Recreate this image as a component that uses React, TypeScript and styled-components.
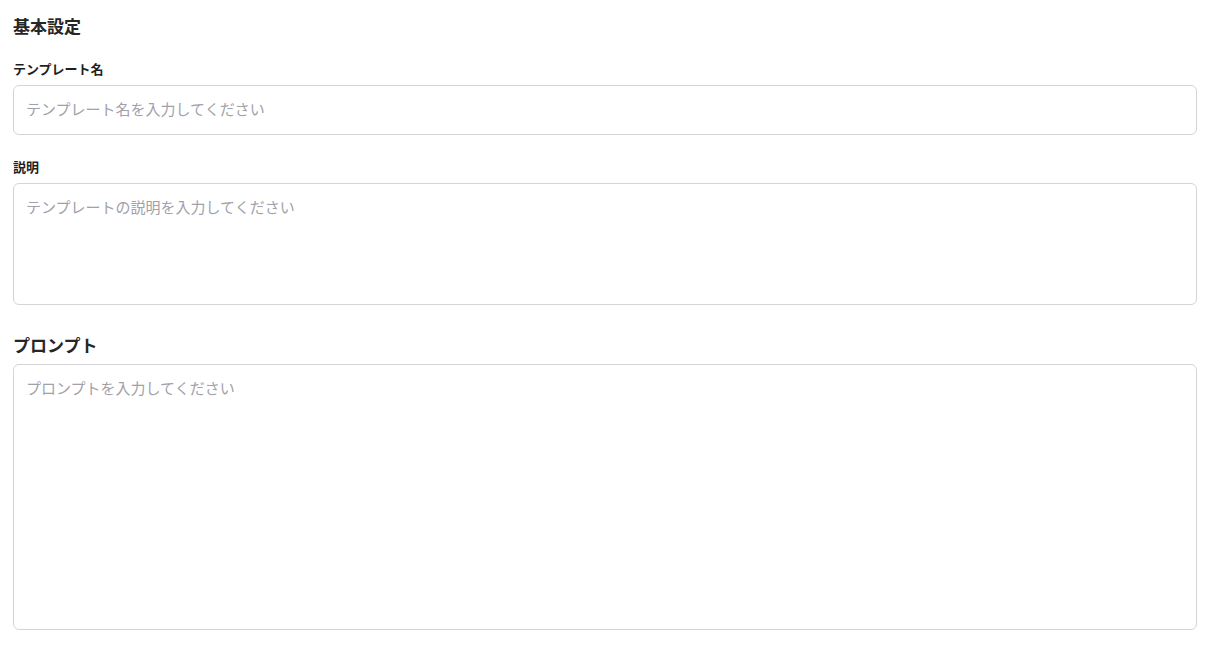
import React from 'react';
import styled, { createGlobalStyle } from 'styled-components';

const GlobalStyle = createGlobalStyle`
  body {
    margin: 0;
    background: #ffffff;
    font-family: "Noto Sans CJK JP", "Noto Sans", sans-serif;
    color: #1f2328;
  }
  * { box-sizing: border-box; }
`;

const Page = styled.div`
  padding: 12px 19px 0 13px;
  display: flex;
  flex-direction: column;
`;

const Section = styled.section`
  display: flex;
  flex-direction: column;
`;

const SectionTitle = styled.h2`
  margin: 0 0 20px;
  font-size: 17px;
  font-weight: 700;
  line-height: 28px;
  color: #262626;
`;

const PromptTitle = styled(SectionTitle)`
  margin-bottom: 5px;
`;

const Field = styled.div<{ $gap?: number }>`
  display: flex;
  flex-direction: column;
  margin-bottom: ${(p) => p.$gap ?? 23}px;
`;

const Label = styled.label`
  font-size: 13px;
  font-weight: 700;
  line-height: 18px;
  margin-bottom: 7px;
  color: #1f1f1f;
`;

const baseField = `
  width: 100%;
  border: 1px solid #d4d4d8;
  border-radius: 6px;
  background: #fff;
  font-family: "Noto Sans CJK JP", "Noto Sans", sans-serif;
  font-size: 15px;
  color: #1f2328;
  padding: 12px 12px;
  outline: none;
  &::placeholder { color: #a1a1aa; }
`;

const TextInput = styled.input`
  ${baseField}
  height: 50px;
  padding: 10px 12px 13px;
`;

const TextArea = styled.textarea<{ $h: number }>`
  ${baseField}
  height: ${(p) => p.$h}px;
  resize: none;
  line-height: 22px;
  padding-top: 12px;
  display: block;
`;

export default function App() {
  return (
    <>
      <GlobalStyle />
      <Page>
        <Section>
          <SectionTitle>基本設定</SectionTitle>
          <Field>
            <Label>テンプレート名</Label>
            <TextInput placeholder="テンプレート名を入力してください" />
          </Field>
          <Field $gap={26}>
            <Label>説明</Label>
            <TextArea $h={122} placeholder="テンプレートの説明を入力してください" />
          </Field>
        </Section>
        <Section>
          <PromptTitle>プロンプト</PromptTitle>
          <TextArea $h={266} placeholder="プロンプトを入力してください" />
        </Section>
      </Page>
    </>
  );
}
